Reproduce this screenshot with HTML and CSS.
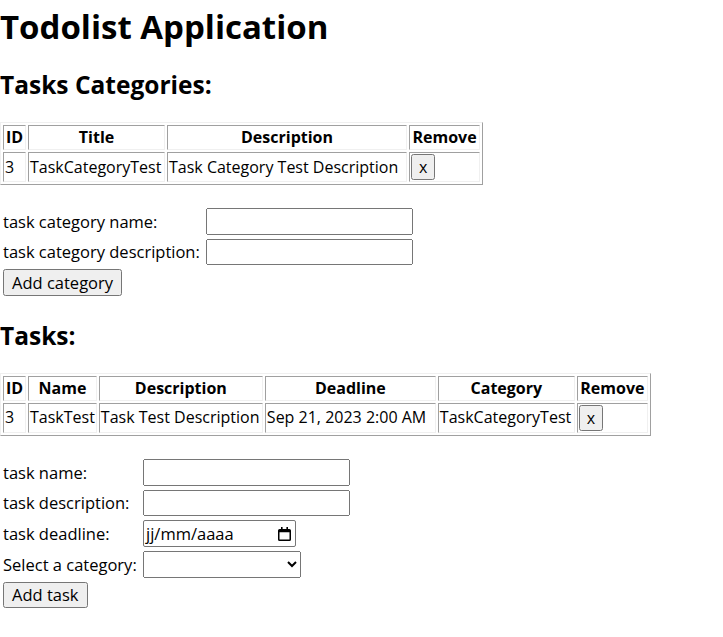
FILE: index.html
```html
<!DOCTYPE html>
<html lang="fr">
<head>
<meta charset="utf-8">
<title>Todolist Application</title>
<link rel="stylesheet" href="styles.css">
</head>
<body>
<h1 class="page-title">Todolist Application</h1>

<h2 class="section-title">Tasks Categories:</h2>
<table class="data-table">
  <thead>
    <tr>
      <th class="col-id">ID</th>
      <th class="col-title">Title</th>
      <th class="col-cat-desc">Description</th>
      <th class="col-remove">Remove</th>
    </tr>
  </thead>
  <tbody>
    <tr>
      <td>3</td>
      <td>TaskCategoryTest</td>
      <td>Task Category Test Description</td>
      <td><button class="btn remove-btn" type="button">x</button></td>
    </tr>
  </tbody>
</table>

<form class="entry-form category-form">
  <label class="form-label" for="cat-name">task category name:</label>
  <input class="field text-field" id="cat-name" type="text">
  <label class="form-label" for="cat-desc">task category description:</label>
  <input class="field text-field" id="cat-desc" type="text">
  <button class="btn submit-btn" type="button">Add category</button>
</form>

<h2 class="section-title">Tasks:</h2>
<table class="data-table">
  <thead>
    <tr>
      <th class="col-id">ID</th>
      <th class="col-name">Name</th>
      <th class="col-task-desc">Description</th>
      <th class="col-deadline">Deadline</th>
      <th class="col-category">Category</th>
      <th class="col-remove">Remove</th>
    </tr>
  </thead>
  <tbody>
    <tr>
      <td>3</td>
      <td>TaskTest</td>
      <td>Task Test Description</td>
      <td>Sep 21, 2023 2:00 AM</td>
      <td>TaskCategoryTest</td>
      <td><button class="btn remove-btn" type="button">x</button></td>
    </tr>
  </tbody>
</table>

<form class="entry-form task-form">
  <label class="form-label" for="task-name">task name:</label>
  <input class="field text-field" id="task-name" type="text">
  <label class="form-label" for="task-desc">task description:</label>
  <input class="field text-field" id="task-desc" type="text">
  <label class="form-label" for="task-deadline">task deadline:</label>
  <span class="field date-field" id="task-deadline">
    <span class="date-placeholder">jj/mm/aaaa</span>
    <svg class="calendar-icon" viewBox="0 0 13 14" width="13" height="14" aria-hidden="true">
      <path fill-rule="evenodd" d="M3 0h1.6v2h3.8V0H10v2h1.4A1.6 1.6 0 0 1 13 3.6v8.8A1.6 1.6 0 0 1 11.4 14H1.6A1.6 1.6 0 0 1 0 12.4V3.6A1.6 1.6 0 0 1 1.6 2H3z M1.5 5.2v7.3h10V5.2z"/>
    </svg>
  </span>
  <label class="form-label" for="task-category">Select a category:</label>
  <select class="field select-field" id="task-category">
    <option value=""></option>
  </select>
  <button class="btn submit-btn" type="button">Add task</button>
</form>
</body>
</html>
```

FILE: styles.css
```css
html,
body {
  margin: 0;
  padding: 0;
  background: #ffffff;
  color: #000000;
  font-family: "Open Sans", "Noto Sans", sans-serif;
  font-size: 16.5px;
}

.page-title {
  font-size: 33px;
  font-weight: 700;
  line-height: 42px;
  margin: 6px 0 21px;
}

.section-title {
  font-size: 24.5px;
  font-weight: 700;
  line-height: 32px;
  margin: 21px 0 21px;
}

/* data tables (border="1" look) */
.data-table {
  border-collapse: separate;
  border-spacing: 2px;
  border: 1px solid;
  border-color: #f0f0f0 #a0a0a0 #a0a0a0 #f0f0f0;
  font-size: 16px;
}

.data-table th,
.data-table td {
  border: 1px solid;
  border-color: #a0a0a0 #f0f0f0 #f0f0f0 #a0a0a0;
  padding: 1px;
  line-height: 21px;
  white-space: nowrap;
  vertical-align: middle;
}

.data-table th {
  font-weight: 700;
  text-align: center;
}

.data-table td {
  text-align: left;
}

.col-id { width: 19px; }
.col-title { width: 133px; }
.col-cat-desc { width: 236px; }
.col-remove { width: 67px; }
.col-name { width: 63px; }
.col-task-desc { width: 160px; }
.col-deadline { width: 167px; }
.col-category { width: 133px; }

/* buttons */
.btn {
  font-family: inherit;
  font-size: 16.5px;
  color: #000000;
  padding: 0 7px;
  line-height: 20px;
  box-sizing: border-box;
}

.remove-btn {
  height: 26px;
  font-size: 16px;
  padding: 0 6px;
  vertical-align: top;
}

.submit-btn {
  height: 26.67px;
  grid-column: 1 / -1;
  justify-self: start;
}

/* entry forms */
.entry-form {
  display: grid;
  justify-content: start;
  align-items: center;
  column-gap: 4px;
  row-gap: 4px;
  padding: 3px;
  margin: 20px 0 0;
}

.category-form {
  grid-template-columns: 199px auto;
}

.task-form {
  grid-template-columns: 136px auto;
}

.form-label {
  white-space: nowrap;
  line-height: 21px;
}

.field {
  box-sizing: border-box;
  height: 26.67px;
  font-family: inherit;
  font-size: 16.5px;
  color: #000000;
  margin: 0;
}

.text-field {
  width: 207px;
}

.date-field {
  display: flex;
  align-items: center;
  justify-content: space-between;
  width: 153px;
  padding: 0 4px 0 2px;
  border: 1px solid #767676;
  border-radius: 2px;
  background: #ffffff;
}

.date-placeholder {
  line-height: 20px;
}

.calendar-icon {
  display: block;
  fill: #000000;
}

.select-field {
  width: 158px;
}
```
